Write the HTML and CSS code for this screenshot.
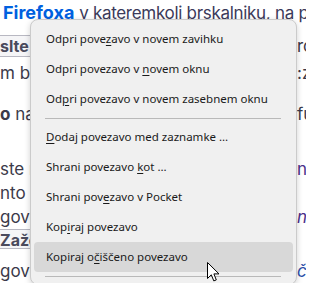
FILE: index.html
```html
<!DOCTYPE html>
<html lang="sl">
<head>
<meta charset="utf-8">
<link rel="stylesheet" href="styles.css">
</head>
<body>
<div class="page">
  <div class="row r1"><span><b class="link">Firefoxa</b> <span class="tight">v kateremkoli brskalniku, na prir</span></span></div>
  <div class="row hdr h1"><span class="cell">slte z</span><span class="right plain">rc</span></div>
  <div class="row r3"><span>m bo</span><span class="right">:zli</span></div>
  <div class="row r4"><span><b>o</b> na</span><span class="right">fu</span></div>
  <div class="row r5"><span>ste n</span><span class="right purple">na</span></div>
  <div class="row r6"><span>nto o</span></div>
  <div class="row r7"><span>govor</span><span class="right purple it">ne</span></div>
  <div class="row hdr h2"><span class="cell">Zažen</span></div>
  <div class="row r9"><span>govo</span><span class="right blue it">ču</span></div>
</div>

<div class="menu">
  <div class="item">Odpri pove<u>z</u>avo v novem zavihku</div>
  <div class="item">Odpri povezavo v <u>n</u>ovem oknu</div>
  <div class="item">Od<u>p</u>ri povezavo v novem zasebnem oknu</div>
  <div class="sep"></div>
  <div class="item"><u>D</u>odaj povezavo med zaznamke …</div>
  <div class="item">Shrani povezavo <u>k</u>ot …</div>
  <div class="item">Shrani pov<u>e</u>zavo v Pocket</div>
  <div class="item">Kop<u>i</u>raj povezavo</div>
  <div class="item active">Kopiraj o<u>č</u>iščeno povezavo</div>
  <div class="sep"></div>
</div>

<svg class="cursor" width="13" height="21" viewBox="0 0 13 21">
  <path d="M0.5 0.5 L0.5 16.5 L4.3 12.8 L6.8 18.9 L9.3 17.9 L6.9 11.9 L12 11.9 Z" fill="#fff" stroke="#000" stroke-width="1" stroke-linejoin="miter"/>
</svg>
</body>
</html>
```

FILE: styles.css
```css
html, body {
  margin: 0;
  padding: 0;
  width: 306px;
  height: 283px;
  overflow: hidden;
  background: #ffffff;
}

.page {
  font-family: Inter, "Noto Sans", sans-serif;
  font-size: 17px;
  color: #3b3a4a;
  display: flex;
  flex-direction: column;
}

.row {
  display: flex;
  white-space: nowrap;
  height: 24px;
  line-height: 24px;
}

.row .right {
  margin-left: auto;
  width: 9px;
  overflow: hidden;
  white-space: nowrap;
}

.r1 {
  height: 26px;
  line-height: 26px;
  padding-left: 3px;
  color: #3b3a5a;
  overflow: hidden;
}

.tight {
  letter-spacing: -0.3px;
}

.link {
  color: #0060df;
  font-weight: 700;
  font-size: 18px;
}

.hdr {
  height: 20px;
  line-height: 20px;
}

.hdr .cell {
  font-weight: 700;
  font-size: 16px;
  color: #4a4a5c;
  background: #f5f5f7;
  border-top: 1px solid #b8b8c2;
  border-bottom: 1px solid #b8b8c2;
  width: 40px;
  margin-left: -2px;
  padding-left: 2px;
  overflow: hidden;
}

.h1 { margin-top: 9px; height: 22px; }
.h1 .right { line-height: 22px; }
.r3 { margin-top: 4px; }
.r4 { margin-top: 17px; }
.r5 { margin-top: 31px; }
.h2 { margin-top: 0; }
.r9 { margin-top: 10px; }

.purple { color: #4b2f8a; }
.blue { color: #2d4fa8; }
.it { font-style: italic; }

.menu {
  position: absolute;
  left: 30px;
  top: 19px;
  width: 259px;
  padding: 4px 3px;
  background: #f0f0f0;
  border: 1px solid #cbcbcb;
  border-radius: 8px;
  box-shadow: 0 2px 6px rgba(0, 0, 0, 0.18);
  font-family: "Noto Sans", sans-serif;
  font-size: 11.5px;
  color: #1a1a1a;
}

.item {
  height: 30px;
  line-height: 30px;
  padding-left: 12px;
  border-radius: 4px;
  white-space: nowrap;
}

.item u {
  text-decoration-thickness: 1px;
  text-underline-offset: 2px;
}

.item.active {
  background: #d8d8d8;
}

.sep {
  height: 1px;
  margin: 3.5px 12px 3.5px 11px;
  background: #b9b9b9;
}

.cursor {
  position: absolute;
  left: 206.5px;
  top: 262px;
}
```
